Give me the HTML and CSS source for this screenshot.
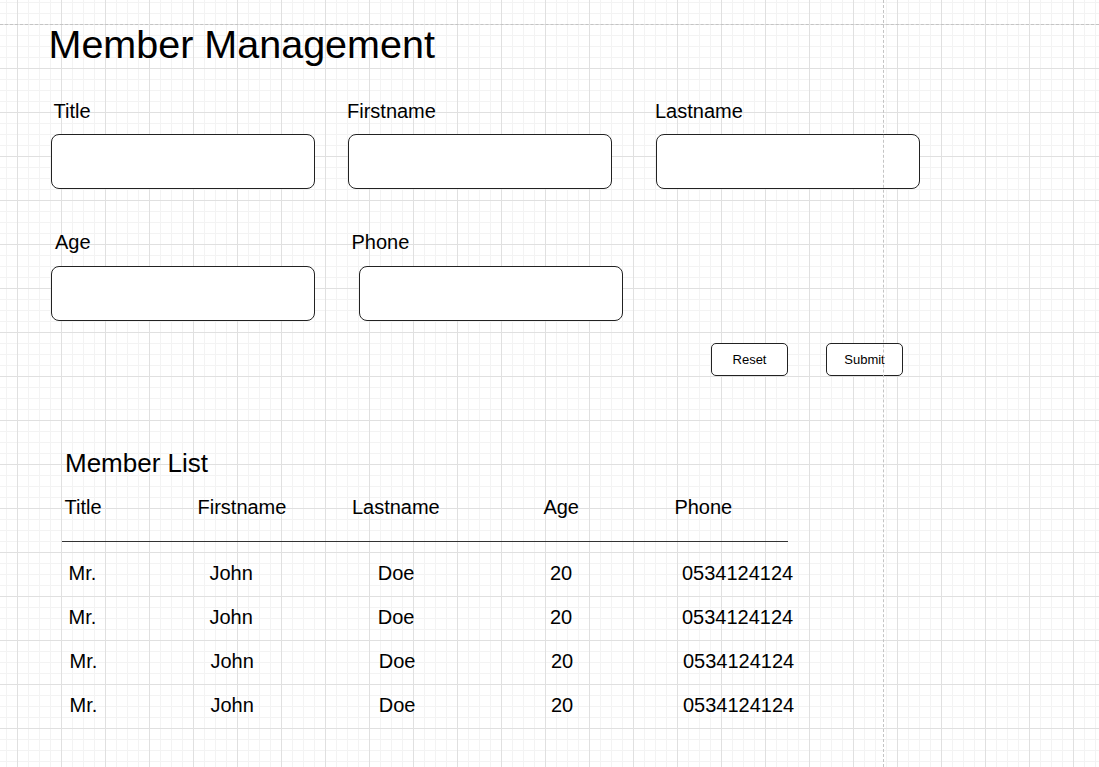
FILE: index.html
```html
<!DOCTYPE html>
<html lang="en">
<head>
<meta charset="utf-8">
<title>Member Management</title>
<link rel="stylesheet" href="styles.css">
</head>
<body>
<div class="page">
  <h1 class="title">Member Management</h1>

  <div class="form">
    <div class="form-row row-1">
      <div class="field f-title">
        <label class="field-label">Title</label>
        <div class="field-input"></div>
      </div>
      <div class="field f-first">
        <label class="field-label">Firstname</label>
        <div class="field-input"></div>
      </div>
      <div class="field f-last">
        <label class="field-label">Lastname</label>
        <div class="field-input"></div>
      </div>
    </div>
    <div class="form-row row-2">
      <div class="field f-age">
        <label class="field-label">Age</label>
        <div class="field-input"></div>
      </div>
      <div class="field f-phone">
        <label class="field-label">Phone</label>
        <div class="field-input"></div>
      </div>
    </div>
    <div class="actions">
      <button class="btn">Reset</button>
      <button class="btn">Submit</button>
    </div>
  </div>

  <h2 class="list-title">Member List</h2>
  <div class="table">
    <div class="thead">
      <span>Title</span><span>Firstname</span><span>Lastname</span><span>Age</span><span>Phone</span>
    </div>
    <div class="rule"></div>
    <div class="tbody">
      <div class="trow"><span>Mr.</span><span>John</span><span>Doe</span><span>20</span><span>0534124124</span></div>
      <div class="trow"><span>Mr.</span><span>John</span><span>Doe</span><span>20</span><span>0534124124</span></div>
      <div class="trow shifted"><span>Mr.</span><span>John</span><span>Doe</span><span>20</span><span>0534124124</span></div>
      <div class="trow shifted"><span>Mr.</span><span>John</span><span>Doe</span><span>20</span><span>0534124124</span></div>
    </div>
  </div>
</div>
</body>
</html>
```

FILE: styles.css
```css
html, body {
  margin: 0;
  padding: 0;
}

body {
  font-family: "Liberation Sans", Arial, Helvetica, sans-serif;
  color: #000;
  background-color: #fff;
  background-image:
    linear-gradient(to right, #e0e0e0 1px, transparent 1px),
    linear-gradient(to bottom, #e0e0e0 1px, transparent 1px),
    linear-gradient(to right, #f3f3f3 1px, transparent 1px),
    linear-gradient(to bottom, #f3f3f3 1px, transparent 1px);
  background-size: 44px 44px, 44px 44px, 11px 11px, 11px 11px;
  background-position: 17px 24px, 17px 24px, 17px 24px, 17px 24px;
}

.page {
  position: relative;
  width: 1099px;
  height: 767px;
  overflow: hidden;
}

/* page boundary guides (drawn over the canvas) */
.page::before {
  content: "";
  position: absolute;
  left: 0;
  right: 0;
  top: 24px;
  border-top: 1px dashed #c4c4c4;
}

.page::after {
  content: "";
  position: absolute;
  top: 0;
  bottom: 0;
  left: 883px;
  border-left: 1px dashed #c4c4c4;
}

.title {
  margin: 0;
  padding: 22px 0 0 48.5px;
  font-size: 39.5px;
  line-height: 45px;
  font-weight: normal;
}

.form {
  margin-top: 32px;
}

.form-row {
  display: flex;
}

.row-2 {
  margin-top: 40.5px;
}

.field {
  width: 264px;
  display: flex;
  flex-direction: column;
}

.field-label {
  font-size: 20px;
  line-height: 24px;
  margin-bottom: 11px;
}

.row-2 .field-label {
  margin-bottom: 12.5px;
}

.field-input {
  box-sizing: border-box;
  height: 55px;
  border: 1px solid #222;
  border-radius: 8px;
  background: #fff;
}

.f-title { margin-left: 51px; }
.f-title .field-label { padding-left: 2.5px; }
.f-first { margin-left: 33px; }
.f-first .field-label { margin-left: -1px; }
.f-last { margin-left: 44px; }
.f-last .field-label { margin-left: -1px; }

.f-age { margin-left: 51px; }
.f-age .field-label { padding-left: 4px; }
.f-phone { margin-left: 44px; }
.f-phone .field-label { margin-left: -7.5px; }

.actions {
  display: flex;
  gap: 38px;
  margin-top: 22px;
  padding-left: 711px;
}

.btn {
  box-sizing: border-box;
  width: 77px;
  height: 33px;
  padding: 0;
  border: 1px solid #222;
  border-radius: 5px;
  background: #fff;
  font-family: "Liberation Sans", Arial, Helvetica, sans-serif;
  font-size: 13px;
  color: #000;
}

.list-title {
  margin: 72px 0 0 0;
  padding-left: 65px;
  font-size: 26px;
  line-height: 30px;
  font-weight: normal;
}

.table {
  margin-top: 16.7px;
  font-size: 20px;
  line-height: 24px;
}

.thead {
  display: grid;
  grid-template-columns: 133px 154.4px 191.5px 131px auto;
  padding-left: 64.5px;
}

.rule {
  margin: 22px 0 0 62px;
  width: 726px;
  height: 1px;
  background: #333;
}

.tbody {
  margin-top: 19.4px;
}

.trow {
  display: grid;
  grid-template-columns: 141px 168.2px 172.3px 132px auto;
  height: 44px;
  padding-left: 68.5px;
}

.trow.shifted {
  padding-left: 69.5px;
}
```
